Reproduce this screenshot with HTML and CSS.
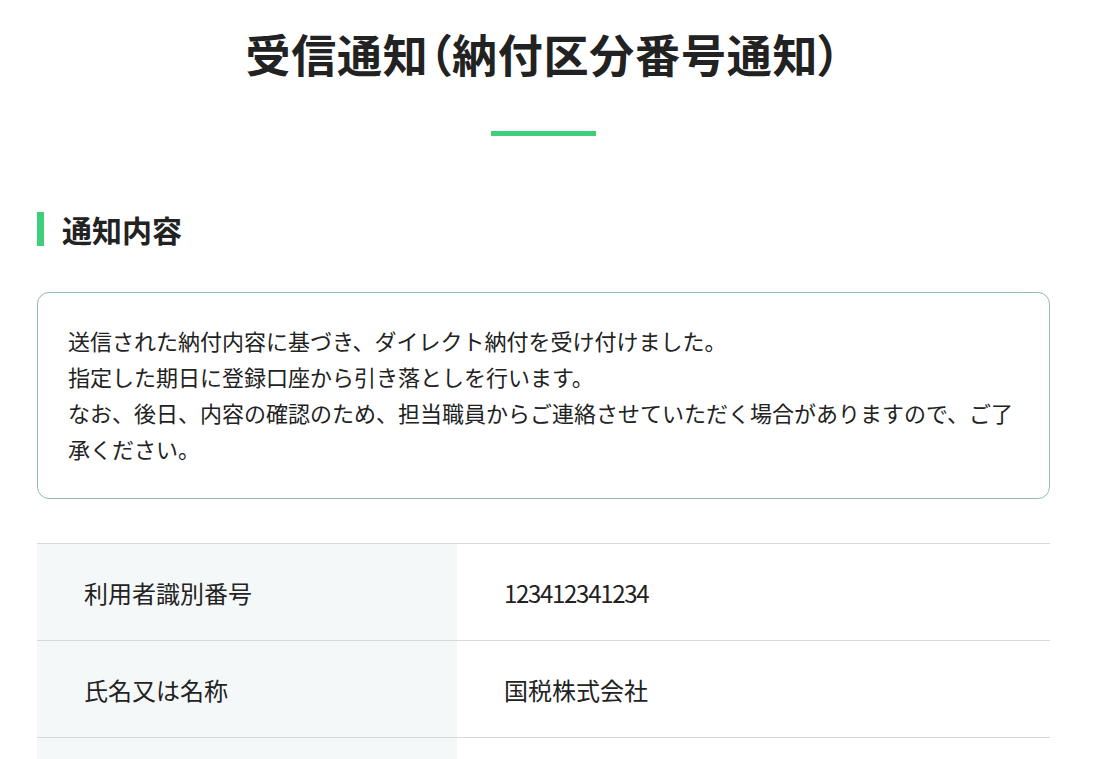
FILE: index.html
```html
<!DOCTYPE html>
<html lang="ja">
<head>
  <meta charset="utf-8">
  <title>受信通知（納付区分番号通知）</title>
  <link rel="stylesheet" href="styles.css">
</head>
<body>
  <div class="container">
    <h1 class="page-title">受信通知（納付区分番号通知）</h1>

    <h2 class="section-title">通知内容</h2>

    <div class="notice">
      <p>送信された納付内容に基づき、ダイレクト納付を受け付けました。<br>
      指定した期日に登録口座から引き落としを行います。<br>
      なお、後日、内容の確認のため、担当職員からご連絡させていただく場合がありますので、ご了承ください。</p>
    </div>

    <table class="info-table">
      <tr>
        <th>利用者識別番号</th>
        <td><span class="num">123412341234</span></td>
      </tr>
      <tr>
        <th>氏名又は名称</th>
        <td>国税株式会社</td>
      </tr>
      <tr>
        <th>納付区分番号</th>
        <td><span class="num">1234567890</span></td>
      </tr>
    </table>
  </div>
</body>
</html>
```

FILE: styles.css
```css
body {
  font-family: "Noto Sans CJK JP", "Noto Sans", sans-serif;
  color: #222;
  background-color: #fff;
  margin: 0;
  padding: 0;
}

.container {
  width: 1013px;
  margin: 0 0 0 37px;
}

.page-title {
  font-size: 45px;
  font-weight: bold;
  font-feature-settings: "palt";
  letter-spacing: 0.8px;
  text-align: center;
  line-height: 60px;
  margin: 24px 0 0;
  padding-bottom: 52px;
  position: relative;
}

.page-title::after {
  content: "";
  position: absolute;
  left: 50%;
  bottom: 0;
  width: 105px;
  height: 5px;
  margin-left: -53px;
  background-color: #3ecf7a;
}

.section-title {
  font-size: 30px;
  font-weight: bold;
  line-height: 34px;
  margin: 76px 0 46px;
  padding-left: 18px;
  border-left: 7px solid #3ecf7a;
}

.notice {
  border: 1px solid #93bab3;
  border-radius: 12px;
  padding: 29px 30px 32px;
}

.notice p {
  margin: 0;
  font-size: 22px;
  line-height: 36px;
}

.info-table {
  width: 100%;
  margin-top: 44px;
  border-collapse: collapse;
  font-size: 24px;
}

.info-table tr {
  border-top: 1px solid #d5d9dc;
  border-bottom: 1px solid #d5d9dc;
}

.info-table th,
.info-table td {
  height: 96px;
  padding: 0 47px;
  text-align: left;
  font-weight: normal;
}

.info-table th {
  width: 326px;
  background-color: #f5f8f8;
}

.num {
  letter-spacing: -1.3px;
}
```
